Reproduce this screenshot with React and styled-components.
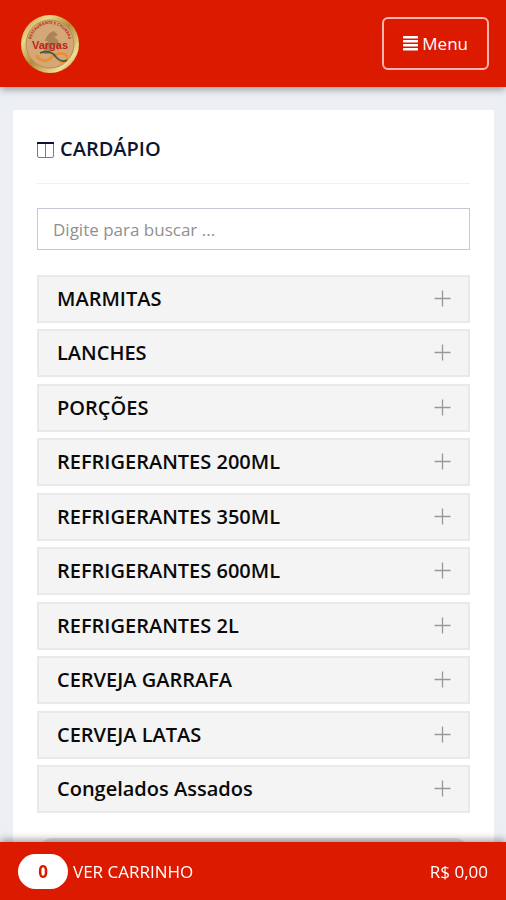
import styled, { createGlobalStyle } from 'styled-components';
import { useState } from 'react';

const GlobalStyle = createGlobalStyle`
  * {
    box-sizing: border-box;
  }

  html {
    scrollbar-width: none;
  }

  body {
    margin: 0;
    background-color: #ecf0f4;
    color: #111;
    font-family: 'Open Sans', 'Noto Sans', sans-serif;
    font-size: 17px;
  }

  button, input {
    font-family: inherit;
  }
`;

const Header = styled.header`
  position: sticky;
  top: 0;
  z-index: 2;
  display: flex;
  align-items: center;
  justify-content: space-between;
  height: 87px;
  padding: 0 17px 0 20px;
  background-color: #db1a00;
  box-shadow: 0 2px 8px #00000066;
`;

const LogoLink = styled.a`
  display: flex;

  & > svg {
    width: 60px;
    height: 60px;
  }
`;

const MenuButton = styled.button`
  display: flex;
  align-items: center;
  gap: 4px;
  height: 53px;
  padding: 0 19px;
  border: 2px solid #ffb5ac;
  border-radius: 6px;
  background: none;
  color: #fff;
  font-size: 17px;
  font-weight: 500;
  cursor: pointer;
`;

const Card = styled.main`
  margin: 23px 12px 0 13px;
  padding: 24px 24px 90px;
  background-color: #fff;
`;

const Title = styled.h1`
  display: flex;
  align-items: center;
  gap: 5px;
  margin: 0 0 24px;
  padding-bottom: 20px;
  border-bottom: 1px solid #eef0f2;
  color: #0b1530;
  font-size: 20px;
  font-weight: 600;
  line-height: 29px;
`;

const SearchInput = styled.input`
  display: block;
  width: 100%;
  height: 42px;
  margin-bottom: 25px;
  padding: 0 15px;
  border: 1px solid #c5c7d6;
  border-radius: 0;
  background-color: #fff;
  color: #333;
  font-size: 17px;

  &::placeholder {
    color: #8f8f8f;
    opacity: 1;
  }
`;

const CategoryList = styled.ul`
  display: flex;
  flex-direction: column;
  gap: 6px;
  margin: 0 0 24px;
  padding: 0;
  list-style: none;
`;

const Category = styled.li`
  &:nth-child(even) {
    padding-bottom: 1px;
  }
`;

const CategoryButton = styled.button`
  display: flex;
  align-items: center;
  justify-content: space-between;
  width: 100%;
  height: 48px;
  padding: 0 17px 1px 18px;
  border: 2px solid #e9e9e9;
  background-color: #f4f4f4;
  color: #0a0a0a;
  font-size: 20px;
  font-weight: 600;
  text-align: left;
  cursor: pointer;

  & > svg {
    transform: ${props => props.$open ? 'rotate(45deg)' : 'none'};
  }
`;

const EndPanel = styled.div`
  height: 40px;
  border-radius: 16px;
  background-color: #e4e4e4;
`;

const CartBar = styled.footer`
  position: fixed;
  right: 0;
  bottom: 0;
  left: 0;
  z-index: 2;
  display: flex;
  align-items: center;
  justify-content: space-between;
  height: 58px;
  padding: 0 18px;
  background-color: #db1a00;
  box-shadow: 0 -2px 8px #00000066;
  color: #fff;
  font-size: 17px;
  font-weight: 500;
`;

const CartButton = styled.button`
  display: flex;
  align-items: center;
  gap: 5px;
  padding: 0;
  border: none;
  background: none;
  color: inherit;
  font-size: inherit;
  font-weight: inherit;
  cursor: pointer;
`;

const CartCount = styled.span`
  width: 50px;
  border-radius: 18px;
  background-color: #fff;
  color: #db1a00;
  font-size: 17px;
  font-weight: 700;
  line-height: 35px;
  text-align: center;
`;

const categories = [
  'MARMITAS',
  'LANCHES',
  'PORÇÕES',
  'REFRIGERANTES 200ML',
  'REFRIGERANTES 350ML',
  'REFRIGERANTES 600ML',
  'REFRIGERANTES 2L',
  'CERVEJA GARRAFA',
  'CERVEJA LATAS',
  'Congelados Assados',
];

function Logo() {
  return (
    <svg viewBox='0 0 60 60' role='img' aria-label='Vargas'>
      <defs>
        <linearGradient id='rim' x1='0' y1='0' x2='1' y2='1'>
          <stop offset='0' stopColor='#a98330' />
          <stop offset='0.25' stopColor='#ecd98f' />
          <stop offset='0.5' stopColor='#b28c3a' />
          <stop offset='0.8' stopColor='#f0dd98' />
          <stop offset='1' stopColor='#9b752b' />
        </linearGradient>
        <path id='arc' d='M11 29 A19 19 0 0 1 49 29' />
      </defs>
      <circle cx='30' cy='30' r='29' fill='url(#rim)' />
      <circle cx='30' cy='30' r='24' fill='#d3a777' stroke='#b88c4c' />
      <path d='M24 40 C24 32 26 29 29 27 L25 27 C26 22 30 18 34 17 L38 21 L34 23 C39 25 40 31 38 37 L35 31 L32 33 L29 40 Z' fill='#ab8557' />
      <text fill='#b02a16' fontSize='4' fontWeight='700'>
        <textPath href='#arc' startOffset='50%' textAnchor='middle'>RESTAURANTE E CHURRAS</textPath>
      </text>
      <g fill='#bd2417' fontSize='11' fontWeight='700' fontFamily='Liberation Sans, sans-serif'>
        <text x='30' y='35' textAnchor='middle'>Vargas</text>
      </g>
      <path d='M16 41 C20 48 27 48 31 44 C35 39 44 38 47 42 C49 47 43 49 39 47' fill='none' stroke='#e9912e' strokeWidth='2.6' />
      <path d='M20 39 C28 36 34 39 36 43 C39 47 44 48 47 46' fill='none' stroke='#4b5b40' strokeWidth='1.8' />
    </svg>
  );
}

function BarsIcon() {
  return (
    <svg width='15' height='15' viewBox='0 0 15 15' fill='#fff' aria-hidden='true'>
      <rect y='0' width='15' height='2.4' rx='0.6' />
      <rect y='4' width='15' height='2.4' rx='0.6' />
      <rect y='8' width='15' height='2.4' rx='0.6' />
      <rect y='12' width='15' height='2.4' rx='0.6' />
    </svg>
  );
}

function ColumnsIcon() {
  return (
    <svg width='18' height='18' viewBox='0 0 18 18' fill='none' aria-hidden='true'>
      <path d='M0.5 3 V16 Q0.5 17.5 2 17.5 H15 Q16.5 17.5 16.5 16 V3 M8.5 3 V17' stroke='#777b84' />
      <path d='M0 3 H17' stroke='#0b1530' strokeWidth='2' />
    </svg>
  );
}

function PlusIcon() {
  return (
    <svg width='17' height='17' viewBox='0 0 17 17' stroke='#999' strokeWidth='1.3' aria-hidden='true'>
      <path d='M0.5 8.5 H16.5 M8.5 0.5 V16.5' />
    </svg>
  );
}

function App() {

  const [search, setSearch] = useState('');
  const [openCategory, setOpenCategory] = useState(null);

  const shown = categories.filter(name => name.toLowerCase().includes(search.toLowerCase()));

  return (
    <>
      <GlobalStyle />
      <Header>
        <LogoLink href='#'>
          <Logo />
        </LogoLink>
        <MenuButton type='button'>
          <BarsIcon />
          Menu
        </MenuButton>
      </Header>
      <Card>
        <Title>
          <ColumnsIcon />
          CARDÁPIO
        </Title>
        <SearchInput
          type='text'
          aria-label='Buscar'
          placeholder='Digite para buscar ...'
          value={search}
          onChange={e => setSearch(e.target.value)}
        />
        <CategoryList>
          {shown.map(name =>
            <Category key={name}>
              <CategoryButton
                type='button'
                aria-expanded={openCategory === name}
                $open={openCategory === name}
                onClick={() => setOpenCategory(openCategory === name ? null : name)}
              >
                {name}
                <PlusIcon />
              </CategoryButton>
            </Category>
          )}
        </CategoryList>
        <EndPanel />
      </Card>
      <CartBar>
        <CartButton type='button'>
          <CartCount>0</CartCount>
          VER CARRINHO
        </CartButton>
        <span>R$ 0,00</span>
      </CartBar>
    </>
  );
}

export default App;
